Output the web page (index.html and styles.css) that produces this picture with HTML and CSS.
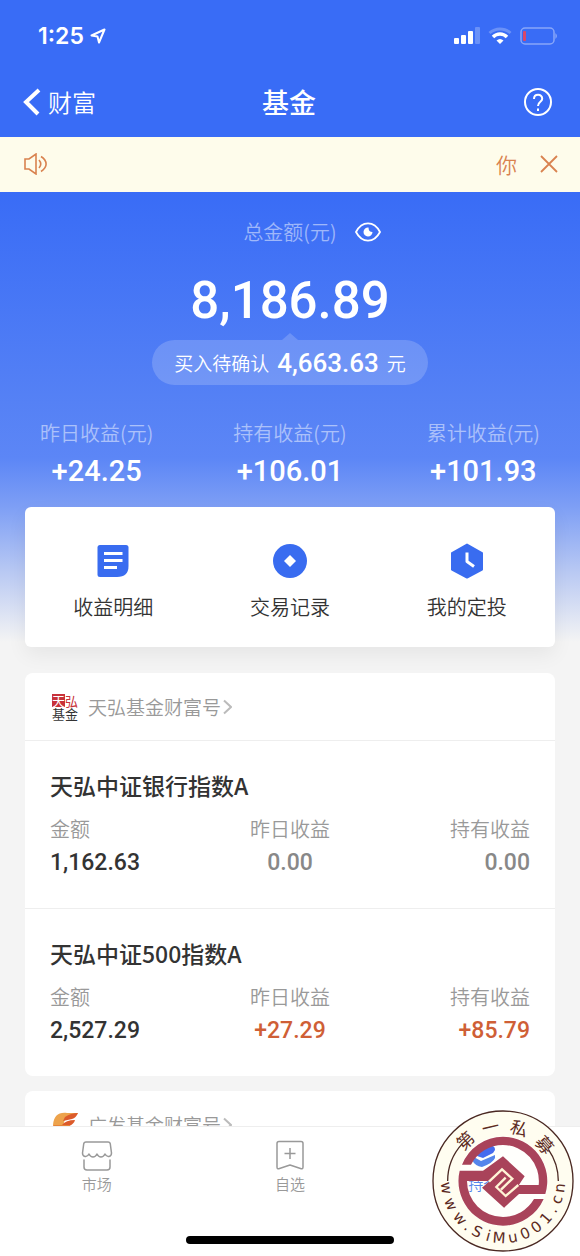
FILE: index.html
```
<!DOCTYPE html>
<html lang="zh-CN">
<head>
    <meta charset="UTF-8">
    <meta name="viewport" content="width=device-width, initial-scale=1.0">
    <title>基金</title>
    <link rel="stylesheet" href="styles.css">
</head>
<body>
    <div class="app">
        <header class="header">
            <div class="status-bar">
                <div class="status-time">
                    <span>1:25</span>
                    <svg width="16" height="16" viewBox="0 0 16 16" fill="none" stroke="#fff" stroke-width="2" stroke-linejoin="round"><path d="M1.500 7.500 14.500 1.500 9 14.500 7.500 8.500Z"/></svg>
                </div>
                <div class="status-icons">
                    <svg width="28" height="18" viewBox="0 0 28 18" fill="#fff">
                        <rect x="2" y="11" width="5" height="6" rx="1"/>
                        <rect x="9" y="8" width="5" height="9" rx="1"/>
                        <rect x="16" y="4" width="5" height="13" rx="1"/>
                        <rect x="23" y="0" width="5" height="17" rx="1" opacity="0.250"/>
                    </svg>
                    <svg width="24" height="18" viewBox="0 0 24 18" fill="none" stroke="#fff" stroke-width="3">
                        <path d="M1.500 6C7.500 0.500 16.500 0.500 22.500 6" opacity="0.250"/>
                        <path d="M5 10C9 6 15 6 19 10" stroke-width="3.500"/>
                        <path d="M8.500 13.500Q12 10.500 15.500 13.500L12 17Z" fill="#fff" stroke="none"/>
                    </svg>
                    <svg width="38" height="18" viewBox="0 0 38 18" fill="none">
                        <rect x="1" y="1" width="33" height="16" rx="4" stroke="#fff" stroke-width="1.500" opacity="0.400"/>
                        <rect x="3" y="4" width="3" height="10" rx="1" fill="#d8486a"/>
                        <path d="M35.500 6Q38 9 35.500 12Z" fill="#fff" opacity="0.500"/>
                    </svg>
                </div>
            </div>
            <nav class="nav-bar">
                <a class="back" href="#">
                    <svg width="20" height="28" viewBox="0 0 20 28" fill="none" stroke="#fff" stroke-width="4"><path d="M17 2 4 14 16 26"/></svg>
                    <span>财富</span>
                </a>
                <h1>基金</h1>
                <button class="help" aria-label="帮助">
                    <svg width="28" height="28" viewBox="0 0 28 28" fill="none" stroke="#fff" stroke-width="2">
                        <circle cx="14" cy="14" r="13"/>
                        <path d="M10 11C10 5.500 18.200 5.500 18.200 10.700C18.200 14 14 13.500 14 18"/>
                        <path d="M14 20.500V23"/>
                    </svg>
                </button>
            </nav>
        </header>

        <div class="notice">
            <svg width="24" height="22" viewBox="0 0 24 22" fill="none" stroke="#d9824f" stroke-width="1.600">
                <path d="M1 6H5L12 1V21L5 16H1Z"/>
                <path d="M15 7Q18.500 11 15 15M17 3.500C23.800 8 23.800 14 17 18.500"/>
            </svg>
            <span class="notice-text">你</span>
            <button class="notice-close" aria-label="关闭">
                <svg width="18" height="18" viewBox="0 0 18 18" stroke="#d9824f" stroke-width="1.800"><path d="M1 1 17 17M17 1 1 17"/></svg>
            </button>
        </div>

        <main class="content">
            <section class="hero">
                <div class="total-label">
                    <span>总金额(元)</span>
                    <button class="eye" aria-label="隐藏金额">
                        <svg width="26" height="20" viewBox="0 0 26 20">
                            <path d="M1 10C7-1.500 19-1.500 25 10C19 21.500 7 21.500 1 10Z" fill="none" stroke="#fff" stroke-width="1.800"/>
                            <path d="M13.500 5.500A4.500 4.500 0 1 0 17.500 10Q13.500 10 13.500 5.500Z" fill="#fff"/>
                        </svg>
                    </button>
                </div>
                <div class="total">8,186.89</div>
                <div class="pending">
                    <span>买入待确认</span>
                    <strong>4,663.63</strong>
                    <span>元</span>
                </div>
                <dl class="earnings">
                    <div><dt>昨日收益(元)</dt><dd>+24.25</dd></div>
                    <div><dt>持有收益(元)</dt><dd>+106.01</dd></div>
                    <div><dt>累计收益(元)</dt><dd>+101.93</dd></div>
                </dl>
                <div class="actions">
                    <a href="#">
                        <svg width="36" height="36" viewBox="0 0 36 36">
                            <path d="M5 2H31Q33.500 2 33.500 4.500V23Q33.500 34 22 34H5Q2.500 34 2.500 31.500V4.500Q2.500 2 5 2Z" fill="#396cf0"/>
                            <path d="M9 10.500H27.500M9 17.500H27.500M9 24.500H22" stroke="#fff" stroke-width="3"/>
                        </svg>
                        <span>收益明细</span>
                    </a>
                    <a href="#">
                        <svg width="36" height="36" viewBox="0 0 36 36">
                            <circle cx="18" cy="18" r="17" fill="#396cf0"/>
                            <path d="M18 12 24 18 18 24 12 18Z" fill="#fff"/>
                        </svg>
                        <span>交易记录</span>
                    </a>
                    <a href="#">
                        <svg width="36" height="36" viewBox="0 0 36 36">
                            <path d="M18 1.500 33 10V26.500L18 34.500 3 26.500V10Z" fill="#396cf0" stroke="#396cf0" stroke-width="2" stroke-linejoin="round"/>
                            <path d="M18 9.500V18.500L25 23.500" fill="none" stroke="#fff" stroke-width="3" stroke-linejoin="round"/>
                        </svg>
                        <span>我的定投</span>
                    </a>
                </div>
            </section>

            <section class="card">
                <a class="card-head" href="#">
                    <span class="th-logo"><b><i>天</i>弘</b><b>基金</b></span>
                    <span>天弘基金财富号</span>
                    <svg width="9" height="16" viewBox="0 0 9 16" fill="none" stroke="#bbb" stroke-width="2"><path d="M1 1.500 8 8 1 14.500"/></svg>
                </a>
                <article class="fund">
                    <h2>天弘中证银行指数A</h2>
                    <dl>
                        <div><dt>金额</dt><dd>1,162.63</dd></div>
                        <div><dt>昨日收益</dt><dd class="flat">0.00</dd></div>
                        <div><dt>持有收益</dt><dd class="flat">0.00</dd></div>
                    </dl>
                </article>
                <article class="fund">
                    <h2>天弘中证500指数A</h2>
                    <dl>
                        <div><dt>金额</dt><dd>2,527.29</dd></div>
                        <div><dt>昨日收益</dt><dd class="up">+27.29</dd></div>
                        <div><dt>持有收益</dt><dd class="up">+85.79</dd></div>
                    </dl>
                </article>
            </section>

            <section class="card">
                <a class="card-head" href="#">
                    <svg width="26" height="26" viewBox="0 0 26 26">
                        <path d="M1 13C2 4 6 0 15 1L26 1Q23 5 16 6Q11 8 12 13Z" fill="#eda34c"/>
                        <path d="M13 5Q19 1 26 1Q24 6 20 7L11 9ZM10 13Q14 8 23 8Q22 12 17 14Z" fill="#dc5b2b"/>
                        <path d="M1 13H18Q16 23 4 25Z" fill="#e68438"/>
                    </svg>
                    <span>广发基金财富号</span>
                    <svg width="9" height="16" viewBox="0 0 9 16" fill="none" stroke="#bbb" stroke-width="2"><path d="M1 1.500 8 8 1 14.500"/></svg>
                </a>
            </section>
        </main>

        <footer class="footer">
            <nav class="tabs">
                <a href="#">
                    <svg width="32" height="32" viewBox="0 0 32 32" fill="none" stroke="#999" stroke-width="1.500" stroke-linejoin="round" stroke-linecap="round">
                        <path d="M5 2H27Q29 2 29.300 4L30.500 13Q30.500 16 28 16.500Q25.500 17 24 14Q22.500 17 20 17Q17.500 17 16 14Q14.500 17 12 17Q9.500 17 8 14Q6.500 17 4 16.500Q1.500 16 1.500 13L2.700 4Q3 2 5 2Z"/>
                        <path d="M3 20V27Q3 30 6 30H26Q29 30 29 27V20"/>
                    </svg>
                    <span>市场</span>
                </a>
                <a href="#">
                    <svg width="32" height="32" viewBox="0 0 32 32" fill="none" stroke="#999" stroke-width="1.500" stroke-linejoin="round">
                        <path d="M5 1.500H27Q29 1.500 29 3.500V27Q29 29.500 26.500 28.500L16 25 5.500 28.500Q3 29.500 3 27V3.500Q3 1.500 5 1.500Z"/>
                        <path d="M16 8V19M10.500 13.500H21.500"/>
                    </svg>
                    <span>自选</span>
                </a>
                <a class="active" href="#">
                    <svg width="32" height="32" viewBox="0 0 32 32">
                        <path d="M9 13 22 6Q28 5 28 10L26 13 16 18 10 16Z" fill="#1746ee"/>
                        <path d="M5 16 14 21 28 15V18Q26 23 15 27Q8 26 5 20Z" fill="#2a67ea"/>
                    </svg>
                    <span>持仓</span>
                </a>
            </nav>
            <div class="home-bar"></div>

            <svg class="seal" viewBox="-216 -216 432 432">
                <circle r="134" fill="#fffdf0" opacity="0.200"/>
                <circle r="172" fill="none" stroke="#fffdf0" stroke-width="76"/>
                <circle r="210" fill="none" stroke="#4a2822" stroke-width="4"/>
                <path d="M-166 0A166 166 0 0 1-122-112M166 0A166 166 0 0 0 136-95" fill="none" stroke="#4a2822" stroke-width="4"/>
                <g fill="#a9435a">
                    <path d="M-123-49A133 133 0 0 1 0-133A133 133 0 0 1 127 39H48L3 80-2 26 8 40 40 12H107A108 108 0 0 0 0-108A108 108 0 0 0-96-49Z"/>
                    <path d="M-130-31H-60L0-74 65-14 3 80-63 20-40 0H-108A108 108 0 0 0 0 108A108 108 0 0 0 93 54H122A134 134 0 0 1 0 134A134 134 0 0 1-130-31Z"/>
                </g>
                <path d="M-42 2-3-35 28-7-6 26M46 12 8 45-20 18 8-10" fill="none" stroke="#fff4d6" stroke-width="7"/>
                <g class="seal-top">
                    <text y="-146" transform="rotate(-43)">第</text>
                    <text y="-146" transform="rotate(-13)">一</text>
                    <text y="-146" transform="rotate(17)">私</text>
                    <text y="-146" transform="rotate(49)">募</text>
                </g>
                <g class="seal-url">
                    <text y="186" transform="rotate(83)">w</text>
                    <text y="186" transform="rotate(66)">w</text>
                    <text y="186" transform="rotate(49)">w</text>
                    <text y="186" transform="rotate(38)">.</text>
                    <text y="186" transform="rotate(27)">S</text>
                    <text y="186" transform="rotate(15)">i</text>
                    <text y="186" transform="rotate(4)">M</text>
                    <text y="186" transform="rotate(-10)">u</text>
                    <text y="186" transform="rotate(-23)">0</text>
                    <text y="186" transform="rotate(-36)">0</text>
                    <text y="186" transform="rotate(-49)">1</text>
                    <text y="186" transform="rotate(-60)">.</text>
                    <text y="186" transform="rotate(-71)">c</text>
                    <text y="186" transform="rotate(-83)">n</text>
                </g>
            </svg>
        </footer>
    </div>
</body>
</html>
```
FILE: styles.css
```
* {
    margin: 0;
    padding: 0;
    box-sizing: border-box;
}

body {
    font-family: "Noto Sans CJK SC", sans-serif;
    font-weight: 350;
    background: #f4f4f4;
    color: #333;
}

a {
    color: inherit;
    text-decoration: none;
}

button {
    display: flex;
    background: none;
    border: none;
    cursor: pointer;
}

svg {
    display: block;
    flex-shrink: 0;
}

.app {
    display: flex;
    flex-direction: column;
    height: 100vh;
}

/* Header */
.header {
    background: #396cf6;
    color: #fff;
}

.status-bar {
    display: flex;
    justify-content: space-between;
    align-items: center;
    height: 68px;
    padding: 4px 22px 0 38px;
}

.status-time {
    display: flex;
    align-items: center;
    gap: 6px;
    font: 600 23px/28px Inter, sans-serif;
}

.status-icons {
    display: flex;
    align-items: center;
    gap: 8px;
}

.nav-bar {
    display: grid;
    grid-template-columns: 1fr auto 1fr;
    align-items: center;
    height: 69px;
    padding: 0 28px 2px 22px;
}

.back {
    display: flex;
    align-items: center;
    gap: 6px;
    font-size: 24px;
    line-height: 32px;
}

.nav-bar h1 {
    padding-left: 4px;
    font-size: 27px;
    font-weight: 500;
    line-height: 32px;
}

.help {
    justify-self: end;
}

.notice {
    display: flex;
    align-items: center;
    height: 55px;
    padding: 0 22px 2px 24px;
    background: #fefceb;
    color: #d9824f;
}

.notice-text {
    margin-left: auto;
    margin-right: 23px;
    font-size: 21px;
    line-height: 24px;
}

/* Scrolling part */
.content {
    flex: 1;
    min-height: 0;
    overflow-y: auto;
    scrollbar-width: none;
}

.hero {
    padding: 26px 25px 0;
    background: linear-gradient(#396cf6 0, #5581f5 210px, #5c86f6 266px, #7e9ff5 315px, #b9c9f3 380px, #f4f4f4 450px);
    color: #fff;
}

.total-label {
    display: flex;
    justify-content: center;
    align-items: center;
    gap: 18px;
    padding-left: 44px;
    font-size: 20px;
    line-height: 28px;
}

.total-label span,
.earnings dt {
    color: rgba(255, 255, 255, 0.5);
}

.total,
.pending strong,
.earnings dd,
.fund dd {
    font-family: Roboto, sans-serif;
    font-weight: 500;
}

.total {
    margin-top: 25px;
    text-align: center;
    font-size: 51px;
    line-height: 60px;
}

.pending {
    position: relative;
    display: flex;
    justify-content: center;
    align-items: center;
    gap: 8px;
    width: fit-content;
    height: 45px;
    margin: 9px auto 0;
    padding: 0 22px;
    border-radius: 23px;
    background: rgba(255, 255, 255, 0.18);
    font-size: 19px;
    line-height: 28px;
}

.pending::before {
    content: "";
    position: absolute;
    bottom: 100%;
    left: 50%;
    margin-left: -8px;
    border: 8px solid transparent;
    border-top: 0;
    border-bottom: 7px solid rgba(255, 255, 255, 0.18);
}

.pending strong {
    font-size: 26px;
}

.earnings {
    display: grid;
    grid-template-columns: repeat(3, 1fr);
    margin: 34px -25px 0;
    text-align: center;
}

.earnings dt {
    font-size: 20px;
    line-height: 28px;
}

.earnings dd {
    margin-top: 8px;
    font-size: 29px;
    line-height: 32px;
}

.actions {
    display: grid;
    grid-template-columns: repeat(3, 1fr);
    margin-top: 20px;
    padding: 36px 0 26px;
    border-radius: 6px;
    background: #fff;
    box-shadow: 0 8px 20px rgba(0, 0, 0, 0.06);
    color: #333;
}

.actions a {
    display: flex;
    flex-direction: column;
    align-items: center;
    gap: 14px;
    font-size: 20px;
    line-height: 28px;
}

/* Fund cards */
.card {
    margin: 26px 25px 0;
    border-radius: 8px;
    background: #fff;
}

.card + .card {
    margin-top: 15px;
}

.card-head {
    display: flex;
    align-items: center;
    height: 67px;
    padding: 0 27px;
    color: #999;
    font-size: 19px;
    line-height: 28px;
}

.card-head span + svg,
.card-head svg + svg {
    margin-left: 2px;
}

.card-head > :first-child {
    margin-right: 10px;
}

.th-logo b {
    display: block;
    color: #333;
    font-size: 13px;
    font-weight: 400;
    line-height: 13px;
}

.th-logo b:first-child {
    color: #c8323a;
}

.th-logo i {
    display: inline-block;
    background: #c8323a;
    color: #fff;
    font-style: normal;
}

.fund {
    padding: 28px 25px 30px;
    border-top: 1px solid #eee;
}

.fund h2 {
    font-size: 23px;
    font-weight: 500;
    line-height: 32px;
}

.fund dl {
    display: grid;
    grid-template-columns: repeat(3, 1fr);
    margin-top: 14px;
    text-align: center;
}

.fund dl div:first-child {
    text-align: left;
}

.fund dl div:last-child {
    text-align: right;
}

.fund dt {
    color: #999;
    font-size: 20px;
    line-height: 28px;
}

.fund dd {
    margin-top: 5px;
    font-size: 23px;
    line-height: 30px;
}

.fund dd.flat {
    color: #888;
}

.fund dd.up {
    color: #cf5f36;
}

/* Bottom tabs */
.footer {
    position: relative;
    height: 130px;
    padding: 13px 0 12px;
    display: flex;
    flex-direction: column;
    justify-content: space-between;
    border-top: 1px solid #eee;
    background: #fff;
}

.tabs {
    display: grid;
    grid-template-columns: repeat(3, 1fr);
}

.tabs a {
    display: flex;
    flex-direction: column;
    align-items: center;
    gap: 1px;
    color: #999;
    font-size: 15px;
    line-height: 22px;
}

.tabs .active {
    color: #2a67ea;
}

.home-bar {
    width: 36%;
    height: 8px;
    margin: 0 auto;
    border-radius: 4px;
    background: #000;
}

.seal {
    position: absolute;
    right: 5px;
    bottom: 3px;
    width: 144px;
    height: 144px;
}

.seal text {
    text-anchor: middle;
    fill: #5c2a22;
}

.seal-top {
    font-size: 52px;
    font-weight: 400;
}

.seal-url {
    font-family: "DejaVu Sans", sans-serif;
    font-size: 45px;
    font-weight: 400;
}
```
